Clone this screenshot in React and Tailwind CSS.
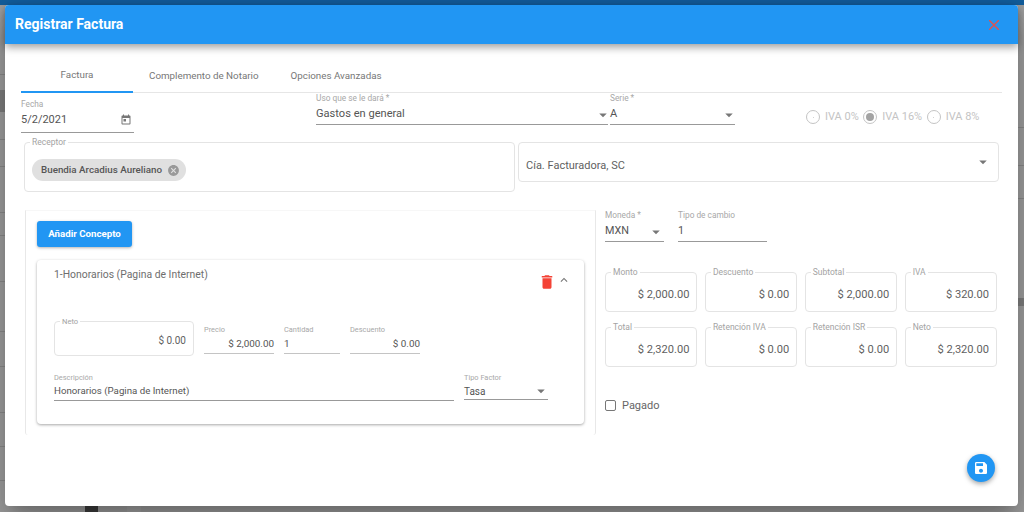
const font = { fontFamily: "Roboto, sans-serif" };

function Arrow({ className }) {
  return (
    <svg viewBox="0 0 24 24" className={className} fill="currentColor">
      <path d="M7 10l5 5 5-5z" />
    </svg>
  );
}

function Field({ label, value, right, arrow, className, rowClass, small }) {
  return (
    <div className={className}>
      <div className={(small ? "text-[7.4px]" : "text-[8.3px]") + " leading-[11px] text-[#a8a8a8] whitespace-nowrap"}>{label}</div>
      <div className={"flex items-center justify-between border-b text-[#555] " + rowClass}>
        <span className={right ? "ml-auto" : ""}>{value}</span>
        {arrow && <Arrow className="w-[18px] h-[18px] text-[#777] -mr-[4px]" />}
      </div>
    </div>
  );
}

function Outlined({ label, value, className, small }) {
  return (
    <div className={"relative flex border border-[#e4e4e4] rounded-[4px] " + className}>
      <span className={(small ? "text-[7.6px]" : "text-[8.5px]") + " absolute left-[5px] -top-[6px] bg-white px-[2px] leading-[11px] text-[#a3a3a3] whitespace-nowrap"}>{label}</span>
      {value}
    </div>
  );
}

function Radio({ checked, label }) {
  return (
    <div className="flex items-center gap-[5px]">
      <div className="w-[14px] h-[14px] rounded-full border border-[#c4c4c4] flex items-center justify-center">
        <div className={checked ? "w-[8px] h-[8px] rounded-full bg-[#a3a3a3]" : "w-[1px] h-[1px] rounded-full bg-[#c4c4c4]"} />
      </div>
      <span>{label}</span>
    </div>
  );
}

function Backdrop() {
  const lines = [74, 139, 166, 212, 235, 281, 331, 366, 412, 446, 480];
  return (
    <div className="absolute inset-0 bg-[#a2a2a2] overflow-hidden">
      <div className="h-[5px] bg-[#135f9f]" />
      <div className="absolute left-0 top-[90px] w-[5px] h-[22px] bg-[#808080]" />
      <div className="absolute right-0 top-[298px] w-[6px] h-[8px] bg-[#808080]" />
      <div className="absolute left-[85px] top-[506px] w-[13px] h-[6px] bg-[#3f3f3f]" />
      <div className="absolute left-[127px] top-[506px] w-[14px] h-[6px] bg-[#a8a8a8]" />
      {lines.map((y) => (
        <div key={y} className="absolute left-0 w-[5px] h-[1px] bg-[#8c8c8c]" style={{ top: y }} />
      ))}
      {[127, 165, 198].map((y) => (
        <div key={y} className="absolute right-0 w-[6px] h-[1px] bg-[#8c8c8c]" style={{ top: y }} />
      ))}
    </div>
  );
}

export default function App() {
  const totals = [
    ["Monto", "$ 2,000.00"],
    ["Descuento", "$ 0.00"],
    ["Subtotal", "$ 2,000.00"],
    ["IVA", "$ 320.00"],
    ["Total", "$ 2,320.00"],
    ["Retención IVA", "$ 0.00"],
    ["Retención ISR", "$ 0.00"],
    ["Neto", "$ 2,320.00"],
  ];

  return (
    <div style={font} className="relative w-[1024px] h-[512px] overflow-hidden pl-[5px] pt-[5px]">
      <Backdrop />
      <div className="relative w-[1013px] h-[501px] bg-white rounded-[4px] shadow-[0_11px_15px_-7px_rgba(0,0,0,0.2),0_24px_38px_3px_rgba(0,0,0,0.14),0_9px_46px_8px_rgba(0,0,0,0.12)]">
        {/* header */}
        <div className="h-[39px] bg-[#2196f3] rounded-t-[4px] flex items-center justify-between pl-[10px] pr-[19px] shadow-[0_3px_8px_rgba(0,0,0,0.4)] relative">
          <span className="text-white text-[14px] font-bold">Registrar Factura</span>
          <svg viewBox="0 0 10 10" className="w-[10px] h-[10px] text-[#e0524f]" stroke="currentColor" strokeWidth="1.4">
            <path d="M0 0l10 10M10 0L0 10" />
          </svg>
        </div>

        <div className="px-[16px]">
          {/* tabs */}
          <div className="h-[49px] w-[981px] flex border-b border-[#e6e6e6] text-[9.8px] text-[#777]">
            <div className="min-w-[112px] flex items-center justify-center border-b-2 border-[#2196f3] h-[49px] pt-[16px]">Factura</div>
            <div className="px-[16px] flex items-center pt-[16px]">Complemento de Notario</div>
            <div className="px-[16px] flex items-center pt-[16px]">Opciones Avanzadas</div>
          </div>

          {/* fecha, uso, serie, iva */}
          <div className="h-[49px] flex items-start">
            <div className="w-[113px] mt-[6px]">
              <div className="text-[8.3px] leading-[11px] text-[#a8a8a8]">Fecha</div>
              <div className="h-[23px] flex items-center justify-between border-b border-[#999] text-[11px] text-[#555] pb-[2px]">
                <span>5/2/2021</span>
                <svg viewBox="0 0 24 24" className="w-[12px] h-[12px] text-[#777] mr-[2px]" fill="currentColor">
                  <path d="M19 3h-1V1h-2v2H8V1H6v2H5c-1.11 0-1.99.9-1.99 2L3 19c0 1.1.89 2 2 2h14c1.1 0 2-.9 2-2V5c0-1.1-.9-2-2-2zm0 16H5V8h14v11zM7 10h5v5H7z" />
                </svg>
              </div>
            </div>
            <Field label="Uso que se le dará *" value="Gastos en general" arrow className="ml-[182px] w-[292px]" rowClass="h-[21px] pt-[1px] text-[11.1px] border-[#999]" />
            <Field label="Serie *" value="A" arrow className="ml-[2px] w-[125px]" rowClass="h-[21px] pt-[1px] text-[11.1px] pr-[1px] border-[#999]" />
            <div className="ml-[71px] mt-[16px] flex items-center gap-[4.5px] text-[11px] text-[#c4c4c4]">
              <Radio label="IVA 0%" />
              <Radio checked label="IVA 16%" />
              <Radio label="IVA 8%" />
            </div>
          </div>

          {/* receptor / empresa */}
          <div className="flex items-start ml-[3px] gap-[3px]">
            <Outlined label="Receptor" className="w-[491px] h-[50px] items-center pl-[7px] pt-[6px]" value={
              <div className="h-[22px] w-[154px] bg-[#e0e0e0] rounded-full flex items-center justify-between pl-[9px] pr-[6px] text-[9.8px] font-medium text-[#555] whitespace-nowrap">
                <span>Buendia Arcadius Aureliano</span>
                <svg viewBox="0 0 24 24" className="w-[13px] h-[13px] text-[#999]" fill="currentColor">
                  <path d="M12 2C6.47 2 2 6.47 2 12s4.47 10 10 10 10-4.47 10-10S17.53 2 12 2zm5 13.59L15.59 17 12 13.41 8.41 17 7 15.59 10.59 12 7 8.41 8.41 7 12 10.59 15.59 7 17 8.41 13.41 12 17 15.59z" />
                </svg>
              </div>
            } />
            <div className="w-[481px] h-[40px] border border-[#e4e4e4] rounded-[4px] flex items-center justify-between pl-[7px] pr-[6px] text-[11px] text-[#5f5f5f]">
              <span className="pt-[8px]">Cía. Facturadora, SC</span>
              <Arrow className="w-[18px] h-[18px] text-[#777] -mt-[1px]" />
            </div>
          </div>

          <div className="flex items-start mt-[18px]">
            {/* conceptos */}
            <div className="ml-[4px] w-[571px] h-[225px] border-l border-r border-t border-[#e8e8e8] border-t-[#f7f7f7] rounded-b-[3px] pl-[11px] pt-[10px]">
              <button className="block w-[95px] h-[26px] bg-[#2196f3] rounded-[3px] text-white text-[9.7px] font-bold shadow-[0_1px_3px_rgba(0,0,0,0.3)]">Añadir Concepto</button>
              <div className="mt-[13px] w-[547px] h-[164px] rounded-[4px] bg-white px-[17px] shadow-[0_1px_3px_rgba(0,0,0,0.35)]">
                <div className="h-[61px] flex items-start justify-between">
                  <span className="mt-[8px] text-[10.4px] leading-[13px] text-[#6e6e6e]">1-Honorarios (Pagina de Internet)</span>
                  <div className="flex items-start mt-[13px] -mr-[4px] gap-[1px]">
                    <svg viewBox="0 0 24 24" className="w-[18px] h-[18px] text-[#f44336]" fill="currentColor">
                      <path d="M6 19c0 1.1.9 2 2 2h8c1.1 0 2-.9 2-2V7H6v12zM19 4h-3.5l-1-1h-5l-1 1H5v2h14V4z" />
                    </svg>
                    <svg viewBox="0 0 24 24" className="w-[14px] h-[14px] text-[#777]" fill="currentColor">
                      <path d="M12 8l-6 6 1.41 1.41L12 10.83l4.59 4.58L18 14z" />
                    </svg>
                  </div>
                </div>
                <div className="flex items-start gap-[10px]">
                  <Outlined small label="Neto" className="w-[140px] h-[35px] items-end justify-end pr-[7px] pb-[8px] text-[10px] text-[#5f5f5f] leading-[13px]" value="$ 0.00" />
                  <Field small label="Precio" value="$ 2,000.00" right className="w-[70px] mt-[3px]" rowClass="h-[19px] text-[9.9px] border-[#c4c4c4]" />
                  <Field small label="Cantidad" value="1" className="w-[56px] mt-[3px]" rowClass="h-[19px] text-[9.9px] border-[#c4c4c4]" />
                  <Field small label="Descuento" value="$ 0.00" right className="w-[70px] mt-[3px]" rowClass="h-[19px] text-[9.9px] border-[#c4c4c4]" />
                </div>
                <div className="flex items-start gap-[10px] mt-[16px]">
                  <Field small label="Descripción" value="Honorarios (Pagina de Internet)" className="w-[400px]" rowClass="h-[18px] text-[9.7px] border-[#999]" />
                  <Field small label="Tipo Factor" value="Tasa" arrow className="w-[84px]" rowClass="h-[17px] text-[10px] pr-[2px] border-[#999]" />
                </div>
              </div>
            </div>

            {/* moneda y totales */}
            <div className="ml-[9px] w-[392px]">
              <div className="flex items-start gap-[14px]">
                <Field label="Moneda *" value="MXN" arrow className="w-[59px]" rowClass="h-[21px] pt-[1px] text-[10.8px] pr-[3px] border-[#999]" />
                <Field label="Tipo de cambio" value="1" className="w-[89px]" rowClass="h-[21px] pt-[1px] text-[10.8px] border-[#999]" />
              </div>
              <div className="mt-[30px] grid grid-cols-4 gap-x-[7.5px] gap-y-[15px]">
                {totals.map(([label, value]) => (
                  <Outlined key={label} label={label} value={value} className="h-[40px] items-end justify-end pr-[7px] pb-[9px] text-[11.1px] leading-[14px] text-[#5f5f5f]" />
                ))}
              </div>
              <div className="mt-[30px] flex items-center gap-[6px] text-[11px] text-[#666]">
                <div className="w-[11px] h-[11px] border border-[#777] rounded-[2px]" />
                <span className="pt-[1px]">Pagado</span>
              </div>
            </div>
          </div>
        </div>

        {/* guardar */}
        <button className="absolute right-[23px] bottom-[24px] w-[28px] h-[28px] rounded-full bg-[#2196f3] flex items-center justify-center shadow-[0_2px_5px_rgba(0,0,0,0.35)]">
          <svg viewBox="0 0 24 24" className="w-[16px] h-[16px] text-white" fill="currentColor">
            <path d="M17 3H5c-1.11 0-2 .9-2 2v14c0 1.1.89 2 2 2h14c1.1 0 2-.9 2-2V7l-4-4zm-5 16c-1.66 0-3-1.34-3-3s1.34-3 3-3 3 1.34 3 3-1.34 3-3 3zm3-10H5V5h10v4z" />
          </svg>
        </button>
      </div>
    </div>
  );
}
